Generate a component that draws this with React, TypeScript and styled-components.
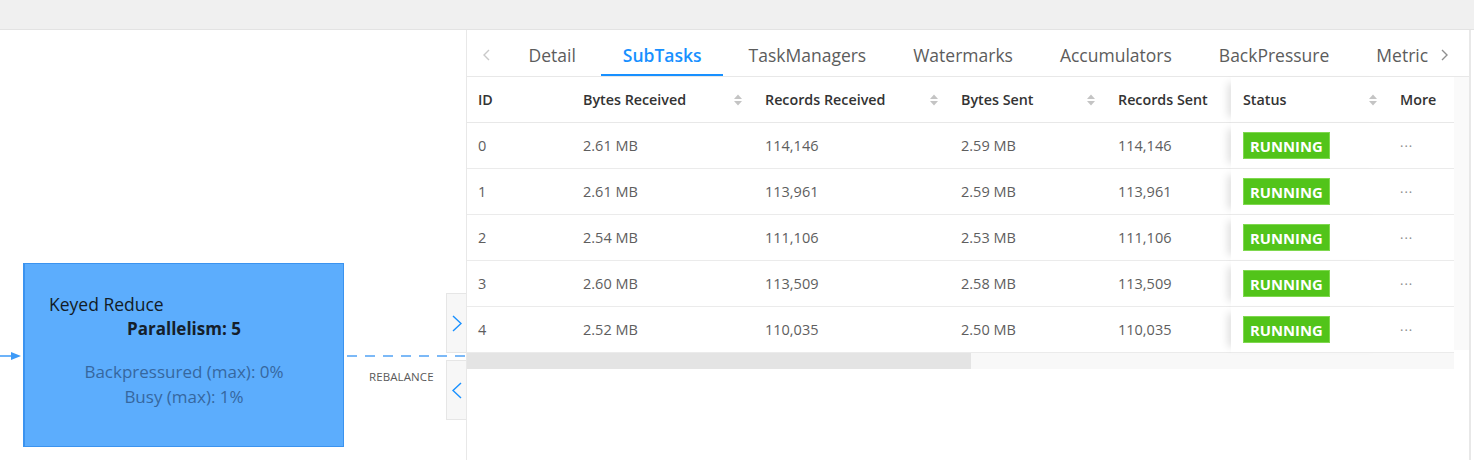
import React from "react";
import styled, { createGlobalStyle } from "styled-components";

const GlobalStyle = createGlobalStyle`
	html, body {
		margin: 0;
		padding: 0;
		background: #ffffff;
	}
	body {
		font-family: "Open Sans", "Noto Sans", sans-serif;
	}
`;

//Page frame
const Page = styled.div`
	width: 1474px;
	height: 460px;
	display: flex;
	flex-direction: column;
	overflow: hidden;
	background: #ffffff;
`;

const TopBar = styled.div`
	height: 29px;
	flex-shrink: 0;
	background: #f0f0f0;
	border-bottom: 1px solid #e3e3e3;
`;

const Body = styled.div`
	display: flex;
	flex: 1;
	min-height: 0;
`;

//Job graph canvas
const Canvas = styled.div`
	position: relative;
	width: 466px;
	flex-shrink: 0;
`;

const Node = styled.div`
	position: absolute;
	left: 23px;
	top: 233px;
	width: 321px;
	height: 184px;
	box-sizing: border-box;
	background: #5cadfd;
	border: 1px solid #3b93ef;
	border-left-width: 2px;
	display: flex;
	flex-direction: column;
`;

const NodeTitle = styled.div`
	margin: 28px 0 0 24px;
	font-size: 17.5px;
	line-height: 24px;
	color: #121c27;
`;

const NodeParallelism = styled.div`
	text-align: center;
	font-size: 17px;
	font-weight: 700;
	line-height: 25px;
	color: #15202b;
`;

const NodeMetric = styled.div<{ $first?: boolean }>`
	margin-top: ${(p) => (p.$first ? "18px" : "0")};
	text-align: center;
	font-size: 17px;
	line-height: 25px;
	color: #36679f;
`;

const Edge = styled.svg<{ $left: number; $width: number }>`
	position: absolute;
	left: ${(p) => p.$left}px;
	top: 320px;
	width: ${(p) => p.$width}px;
	height: 12px;
	overflow: visible;
`;

const EdgeLabel = styled.div`
	position: absolute;
	left: 369px;
	top: 339px;
	font-size: 11.5px;
	line-height: 16px;
	color: #5a5a5a;
	letter-spacing: 0.1px;
`;

const CollapseButton = styled.div<{ $top: number }>`
	position: absolute;
	left: 446px;
	top: ${(p) => p.$top}px;
	width: 20px;
	height: 60px;
	box-sizing: border-box;
	background: #f7f7f7;
	border: 1px solid #e6e6e6;
	border-right: none;
	display: flex;
	align-items: center;
	justify-content: center;
`;

//Drawer with tabs and table
const Drawer = styled.div`
	width: 1002px;
	flex-shrink: 0;
	border-left: 1px solid #e8e8e8;
	border-right: 2px solid #e8e8e8;
	display: flex;
	flex-direction: column;
`;

const TabBar = styled.div`
	height: 46px;
	flex-shrink: 0;
	display: flex;
	border-bottom: 1px solid #e8e8e8;
`;

const TabArrow = styled.div<{ $width: number; $pad: number }>`
	width: ${(p) => p.$width}px;
	flex-shrink: 0;
	display: flex;
	align-items: center;
	padding-top: 3px;
	padding-left: ${(p) => p.$pad}px;
	box-sizing: border-box;
	background: #ffffff;
`;

const TabList = styled.div`
	flex: 1;
	display: flex;
	gap: 4px;
	overflow: hidden;
`;

const Tab = styled.div<{ $active?: boolean }>`
	position: relative;
	flex-shrink: 0;
	padding: 3px 21.5px 0;
	display: flex;
	align-items: center;
	font-size: 17.5px;
	font-weight: ${(p) => (p.$active ? 600 : 400)};
	color: ${(p) => (p.$active ? "#1890ff" : "#5c5c5c")};
	white-space: nowrap;

	&::after {
		content: "";
		position: absolute;
		left: 0;
		right: 0;
		bottom: 0;
		height: 2px;
		background: ${(p) => (p.$active ? "#1890ff" : "transparent")};
	}
`;

const TableArea = styled.div`
	display: flex;
	align-items: flex-start;
`;

const TableWrap = styled.div`
	width: 987px;
	flex-shrink: 0;
`;

const Grid = styled.div`
	display: grid;
	grid-template-columns: 104px 182px 196px 157px 125px 157px 66px;
`;

const HeadCell = styled.div<{ $fixed?: boolean; $first?: boolean }>`
	position: relative;
	height: 45px;
	display: flex;
	align-items: center;
	justify-content: space-between;
	padding: 0 10px 0 ${(p) => (p.$first ? "11px" : "12px")};
	border-bottom: 1px solid #e8e8e8;
	background: #ffffff;
	font-size: 14.3px;
	font-weight: 600;
	color: #333333;
	white-space: nowrap;
	box-shadow: ${(p) => (p.$fixed ? "-9px 0 8px -6px rgba(0,0,0,0.13)" : "none")};
`;

const Cell = styled.div<{ $fixed?: boolean; $first?: boolean }>`
	position: relative;
	height: 45px;
	display: flex;
	align-items: center;
	padding: 0 0 0 ${(p) => (p.$first ? "11px" : "12px")};
	border-bottom: 1px solid #ebebeb;
	background: #ffffff;
	font-size: 14.5px;
	color: #5e5e5e;
	white-space: nowrap;
	box-shadow: ${(p) => (p.$fixed ? "-9px 0 8px -6px rgba(0,0,0,0.13)" : "none")};
`;

const Sorter = styled.svg`
	width: 10px;
	height: 16px;
	flex-shrink: 0;
`;

const StatusTag = styled.span`
	display: inline-flex;
	align-items: center;
	height: 27px;
	padding: 0 6px;
	box-sizing: border-box;
	background: #52c41a;
	border: 1px solid #7fd84f;
	color: #ffffff;
	font-size: 14.8px;
	font-weight: 700;
`;

const MoreDots = styled.span`
	font-size: 13px;
	color: #8c8c8c;
	letter-spacing: 1px;
`;

const ScrollTrack = styled.div`
	height: 16px;
	background: #f8f8f8;
`;

const ScrollThumb = styled.div`
	width: 504px;
	height: 100%;
	background: #e4e4e4;
`;

const Gutter = styled.div`
	width: 15px;
	height: 273px;
	background: #fafafa;
`;

const Chevron = ({ dir, color, w, h }: { dir: "left" | "right"; color: string; w: number; h: number }) => (
	<svg width={w} height={h} viewBox={`0 0 ${w} ${h}`} fill="none">
		<polyline
			points={
				dir === "left"
					? `${w - 1},1 1,${h / 2} ${w - 1},${h - 1}`
					: `1,1 ${w - 1},${h / 2} 1,${h - 1}`
			}
			stroke={color}
			strokeWidth="1.4"
		/>
	</svg>
);

const SortIcon = () => (
	<Sorter viewBox="0 0 10 16">
		<polygon points="1,7 5,2.5 9,7" fill="#c4c4c4" />
		<polygon points="1,9 5,13.5 9,9" fill="#c4c4c4" />
	</Sorter>
);

const tabs = ["Detail", "SubTasks", "TaskManagers", "Watermarks", "Accumulators", "BackPressure", "Metric"];

const rows = [
	{ id: "0", br: "2.61 MB", rr: "114,146", bs: "2.59 MB", rs: "114,146" },
	{ id: "1", br: "2.61 MB", rr: "113,961", bs: "2.59 MB", rs: "113,961" },
	{ id: "2", br: "2.54 MB", rr: "111,106", bs: "2.53 MB", rs: "111,106" },
	{ id: "3", br: "2.60 MB", rr: "113,509", bs: "2.58 MB", rs: "113,509" },
	{ id: "4", br: "2.52 MB", rr: "110,035", bs: "2.50 MB", rs: "110,035" },
];

export function App() {
	return (
		<>
			<GlobalStyle />
			<Page>
				<TopBar />
				<Body>
					<Canvas>
						<Edge $left={0} $width={22} viewBox="0 0 22 12">
							<line x1="0" y1="6" x2="13" y2="6" stroke="#3d9af7" strokeWidth="1.5" />
							<polygon points="11,2 21,6 11,10" fill="#3d9af7" />
						</Edge>
						<Node>
							<NodeTitle>Keyed Reduce</NodeTitle>
							<NodeParallelism>Parallelism: 5</NodeParallelism>
							<NodeMetric $first>Backpressured (max): 0%</NodeMetric>
							<NodeMetric>Busy (max): 1%</NodeMetric>
						</Node>
						<Edge $left={345} $width={121} viewBox="0 0 121 12">
							<line x1="2" y1="6" x2="121" y2="6" stroke="#52a3f5" strokeWidth="1.5" strokeDasharray="10 8" />
						</Edge>
						<EdgeLabel>REBALANCE</EdgeLabel>
						<CollapseButton $top={263}>
							<Chevron dir="right" color="#1890ff" w={10} h={17} />
						</CollapseButton>
						<CollapseButton $top={330}>
							<Chevron dir="left" color="#1890ff" w={10} h={17} />
						</CollapseButton>
					</Canvas>

					<Drawer>
						<TabBar>
							<TabArrow $width={40} $pad={16}>
								<Chevron dir="left" color="#c9c9c9" w={7} h={12} />
							</TabArrow>
							<TabList>
								{tabs.map((t) => (
									<Tab key={t} $active={t === "SubTasks"}>
										{t}
									</Tab>
								))}
							</TabList>
							<TabArrow $width={35} $pad={7}>
								<Chevron dir="right" color="#8f8f8f" w={7} h={12} />
							</TabArrow>
						</TabBar>

						<TableArea>
							<TableWrap>
								<Grid>
									<HeadCell $first>ID</HeadCell>
									<HeadCell>
										Bytes Received
										<SortIcon />
									</HeadCell>
									<HeadCell>
										Records Received
										<SortIcon />
									</HeadCell>
									<HeadCell>
										Bytes Sent
										<SortIcon />
									</HeadCell>
									<HeadCell>Records Sent</HeadCell>
									<HeadCell $fixed>
										Status
										<SortIcon />
									</HeadCell>
									<HeadCell>More</HeadCell>

									{rows.map((r) => (
										<React.Fragment key={r.id}>
											<Cell $first>{r.id}</Cell>
											<Cell>{r.br}</Cell>
											<Cell>{r.rr}</Cell>
											<Cell>{r.bs}</Cell>
											<Cell>{r.rs}</Cell>
											<Cell $fixed>
												<StatusTag>RUNNING</StatusTag>
											</Cell>
											<Cell>
												<MoreDots>···</MoreDots>
											</Cell>
										</React.Fragment>
									))}
								</Grid>
								<ScrollTrack>
									<ScrollThumb />
								</ScrollTrack>
							</TableWrap>
							<Gutter />
						</TableArea>
					</Drawer>
				</Body>
			</Page>
		</>
	);
}

export default App;
